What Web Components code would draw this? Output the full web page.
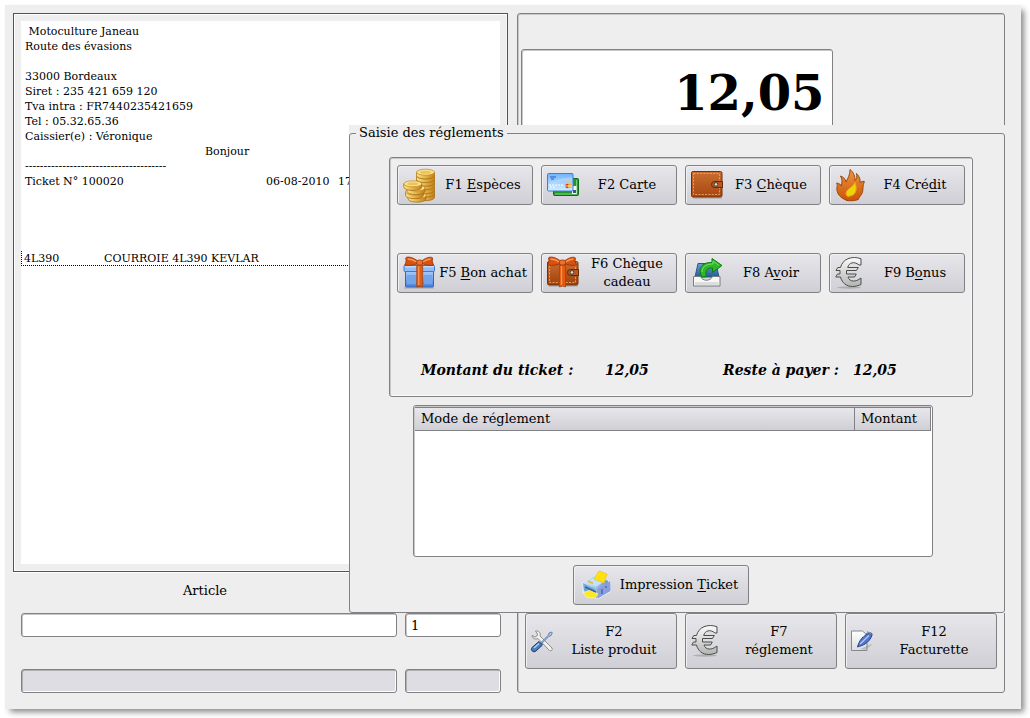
<!DOCTYPE html>
<html lang="fr">
<head>
<meta charset="utf-8">
<meta name="viewport" content="width=device-width, initial-scale=1">
<title>Caisse – Saisie des réglements</title>
<style>
  :root {
    --face: #eeeeee;
    --line: #808184;
    --soft: #c8c8ca;
    --button: linear-gradient(#e6e6eb, #cfcfd5);
  }
  body {
    margin: 0;
    padding: 5px 9px 9px 5px;
    background: #fff;
    color: #000;
    font: 13px/18px "DejaVu Serif", serif;
  }
</style>
</head>
<body>
<pos-app></pos-app>

<template id="tpl-app">
  <style>
    :host { display: block; }
    main {
      display: grid;
      grid-template-columns: minmax(0, 336fr) minmax(0, 159fr) minmax(0, 497fr);
      box-sizing: border-box;
      min-height: calc(100vh - 14px);
      padding: 8px 16px 16px 8px;
      background: var(--face);
      box-shadow: 4px 4px 6px -1px #888;
    }
    .sale { grid-area: 1 / 1 / 2 / 3; display: flex; flex-direction: column; }
    ticket-preview { flex: 1; }
    .fields {
      display: grid;
      grid-template-columns: minmax(0, 376fr) minmax(0, 96fr);
      align-items: end;
      gap: 32px 8px;
      padding: 10px 7px 0 8px;
    }
    .keys {
      grid-area: 1 / 3 / 2 / 4;
      display: flex;
      flex-direction: column;
      justify-content: space-between;
      box-sizing: border-box;
      margin-left: 9px;
      padding: 35px 7px 23px;
      border: 1px solid var(--line);
      border-radius: 3px;
      box-shadow: inset 1px 1px var(--soft);
    }
    .row { display: grid; grid-template-columns: repeat(3, minmax(0, 1fr)); gap: 8px; }
    amount-display { width: 66%; margin-left: -4px; }
    payment-dialog { grid-area: 1 / 2 / 2 / 4; align-self: start; margin-top: 112px; z-index: 1; }
  </style>
  <main>
    <section class="sale">
      <ticket-preview></ticket-preview>
      <div class="fields">
        <line-field label="Article"></line-field>
        <line-field name="Quantité" value="1"></line-field>
        <line-field name="Désignation" off></line-field>
        <line-field name="Prix" off></line-field>
      </div>
    </section>
    <section class="keys">
      <amount-display>12,05</amount-display>
      <div class="row">
        <key-button icon="tools" tall>F2<br>Liste produit</key-button>
        <key-button icon="euro" tall>F7<br>réglement</key-button>
        <key-button icon="invoice" tall>F12<br>Facturette</key-button>
      </div>
    </section>
    <payment-dialog></payment-dialog>
  </main>
</template>

<template id="tpl-ticket">
  <style>
    :host {
      display: block;
      box-sizing: border-box;
      padding: 7px;
      border: 1px solid #505254;
      box-shadow: inset 1px 1px #fff, inset -1px -1px #f8f8f8, 0 1px #fff;
      font-size: 11px;
      line-height: 15px;
    }
    .paper { box-sizing: border-box; height: 100%; padding-top: 3px; background: #fff; }
    p { margin: 0; padding-left: 4px; min-height: 15px; white-space: nowrap; }
    .hello { padding-left: 184px; }
    .head { display: grid; grid-template-columns: 241px 72px 1fr; }
    .item {
      display: grid;
      grid-template-columns: 80px 1fr;
      margin-top: 62px;
      padding-left: 2px;
      height: 14px;
      border: dotted #000;
      border-width: 0 0 1px 1px;
      white-space: nowrap;
    }
  </style>
  <div class="paper">
    <p>&nbsp;Motoculture Janeau</p>
    <p>Route des évasions</p>
    <p></p>
    <p>33000 Bordeaux</p>
    <p>Siret : 235 421 659 120</p>
    <p>Tva intra : FR7440235421659</p>
    <p>Tel : 05.32.65.36</p>
    <p>Caissier(e) : Véronique</p>
    <p class="hello">Bonjour</p>
    <p>--------------------------------------</p>
    <p class="head"><span>Ticket N° 100020</span><span>06-08-2010</span><span>17</span></p>
    <div class="item"><span>4L390</span><span>COURROIE 4L390 KEVLAR</span></div>
  </div>
</template>

<template id="tpl-amount">
  <style>
    :host {
      display: block;
      box-sizing: border-box;
      padding: 15px 7px;
      border: 1px solid var(--line);
      border-radius: 3px;
      background: #fff;
      box-shadow: inset 1px 1px var(--soft);
      font-size: 48px;
      font-weight: bold;
      line-height: 56px;
      text-align: right;
    }
  </style>
  <output><slot></slot></output>
</template>

<template id="tpl-field">
  <style>
    :host { display: block; }
    label { display: block; padding: 0 8px 13px 0; text-align: center; }
    input {
      display: block;
      box-sizing: border-box;
      width: 100%;
      height: 24px;
      margin: 0;
      padding: 0 5px;
      border: 1px solid var(--line);
      border-radius: 3px;
      background: #fff;
      box-shadow: inset 1px 1px var(--soft);
      color: #000;
      font: inherit;
    }
    input:disabled { background: #dddde3; box-shadow: inset 1px 1px #b0b0b4, inset -1px -1px #fff; }
  </style>
  <label for="field"></label>
  <input id="field" type="text">
</template>

<template id="tpl-key">
  <style>
    :host { display: block; }
    button {
      display: flex;
      align-items: center;
      box-sizing: border-box;
      width: 100%;
      height: 40px;
      margin: 0;
      padding: 0 1px 0 5px;
      border: 1px solid var(--line);
      border-radius: 3px;
      background: var(--button);
      box-shadow: inset 1px 1px #f0f0f4;
      color: #000;
      font: inherit;
      text-align: center;
    }
    :host([tall]) button { height: 56px; }
    .label { flex: 1; white-space: nowrap; }
    ::slotted(u) {
      text-decoration-thickness: 1px;
      text-underline-offset: 2px;
      text-decoration-skip-ink: none;
    }
  </style>
  <button type="button"><pos-icon></pos-icon><span class="label"><slot></slot></span></button>
</template>

<template id="tpl-dialog">
  <style>
    :host { display: block; background: var(--face); }
    fieldset {
      min-width: 0;
      margin: 0;
      padding: 16px 31px 7px 39px;
      border: 1px solid var(--line);
      border-radius: 3px;
    }
    legend { margin-left: -33px; padding: 0 3px; line-height: 16px; }
    .modes {
      padding: 7px;
      border: 1px solid var(--line);
      border-radius: 3px;
      box-shadow: inset 1px 1px var(--soft), inset -1px -1px #fafafa;
    }
    .grid { display: grid; grid-template-columns: repeat(4, minmax(0, 1fr)); gap: 48px 8px; }
    dl {
      display: grid;
      grid-template-columns: 184fr 118fr 130fr 112fr;
      margin: 68px 0 10px;
      padding-left: 24px;
      font-size: 14px;
      font-weight: bold;
      font-style: italic;
      white-space: nowrap;
    }
    dd { margin: 0; }
    payment-list { margin: 8px 40px 8px 24px; }
    .print { width: 176px; margin: 0 auto; padding-right: 40px; }
  </style>
  <fieldset>
    <legend>Saisie des réglements</legend>
    <div class="modes">
      <div class="grid">
        <key-button icon="coins">F1 <u>E</u>spèces</key-button>
        <key-button icon="cards">F2 Ca<u>r</u>te</key-button>
        <key-button icon="wallet">F3 <u>C</u>hèque</key-button>
        <key-button icon="flame">F4 Cré<u>d</u>it</key-button>
        <key-button icon="gift">F5 <u>B</u>on achat</key-button>
        <key-button icon="giftwallet">F6 Chè<u>q</u>ue<br>cadeau</key-button>
        <key-button icon="refund">F8 A<u>v</u>oir</key-button>
        <key-button icon="euro">F9 B<u>o</u>nus</key-button>
      </div>
      <dl><dt>Montant du ticket :</dt><dd>12,05</dd><dt>Reste à payer :</dt><dd>12,05</dd></dl>
    </div>
    <payment-list></payment-list>
    <div class="print"><key-button icon="printer">Impression <u>T</u>icket</key-button></div>
  </fieldset>
</template>

<template id="tpl-list">
  <style>
    :host {
      display: block;
      box-sizing: border-box;
      min-height: 152px;
      padding: 1px;
      border: 1px solid var(--line);
      border-radius: 3px;
      background: #fff;
      box-shadow: inset 1px 1px var(--soft);
    }
    table { width: 100%; border-collapse: separate; border-spacing: 0; table-layout: fixed; }
    th {
      height: 22px;
      padding: 0 6px;
      border: solid var(--line);
      border-width: 1px 1px 1px 0;
      background: var(--button);
      font-weight: normal;
      text-align: left;
    }
    th:last-child { width: 63px; }
  </style>
  <table>
    <thead><tr><th scope="col">Mode de réglement</th><th scope="col">Montant</th></tr></thead>
    <tbody></tbody>
  </table>
</template>

<script>
  const BOW = `<path d="M15 5C10 0 3-1 2 1c1 3 0 5-1 7 5 1 10 0 15-2 5 2 10 3 14 2-1-2-2-4-1-7-2-2-8 0-12 4z" fill="#d9510f" stroke="#8f3207" stroke-width=".8"/>
    <path d="M4 2c3 0 6 1 9 3M27 2c-3 0-5 1-8 3" stroke="#f79a62" stroke-width="1.4" fill="none"/>
    <rect x="13" y="3" width="6" height="5" rx="2" fill="#f0702c" stroke="#8f3207" stroke-width=".7"/>`;
  const RIBBON = `<path d="M13 8h6v22l-3-1-3 1z" fill="#e65a10" stroke="#a63c08" stroke-width=".7"/><path d="M15 9v19" stroke="#fb9557" stroke-width="1.3"/>`;
  const wallet = top => `<path d="M2 29h29" stroke="#999" stroke-width="1.5" opacity=".6"/>
    <rect x=".5" y="${top}" width="30.5" height="${28 - top}" rx="1.6" fill="url(#g)" stroke="#743107"/>
    <rect x="2.5" y="${top + 2}" width="26" height="${23.5 - top}" fill="none" stroke="#efa567" stroke-width=".9" stroke-dasharray="2 1.3"/>
    <path d="M31.5 12.5h-8a3 3 0 0 0 0 6h8z" fill="#b9571c" stroke="#63290a"/>
    <circle cx="25" cy="15.4" r="1.8" fill="#d8e4e6" stroke="#32434a"/>`;
  const coin = (x, y) => `<path d="M${x - 9} ${y}v3.2c0 4.6 18 4.6 18 0v-3.2z" fill="url(#g)" stroke="#a06a12" stroke-width=".7"/>
    <ellipse cx="${x}" cy="${y}" rx="9" ry="3" fill="#fbe394" stroke="#bd8420" stroke-width=".7"/>
    <ellipse cx="${x}" cy="${y}" rx="5.5" ry="1.5" fill="#eec352"/>`;
  const grad = (a, b, horizontal) => `<defs><linearGradient id="g" x2="${horizontal ? 1 : 0}" y2="${horizontal ? 0 : 1}"><stop stop-color="${a}"/><stop offset="1" stop-color="${b}"/></linearGradient></defs>`;
  const ICONS = {
    coins: [32, grad('#ffe584', '#c58014', true) +
      [25, 21.5, 18, 14, 10.5, 7, 3.2].map(y => coin(22.5, y)).join('') +
      coin(14, 26.5) + coin(11.5, 23) + coin(13, 19) + coin(9.8, 14.8)],
    cards: [32, grad('#6fb3ff', '#d7edff') +
      `<rect x="6.5" y="9.5" width="25" height="17" rx="1" fill="#25962b" stroke="#0c6d15"/>
       <path d="M8 25h22M29.6 11v14" stroke="#85d488"/><rect x="25" y="17" width="4.5" height="8" fill="#f4f8f4"/><path d="M26 21h3v3h-3z" fill="#454f8a"/>
       <rect x=".5" y="4.5" width="25.5" height="17.5" rx="1" fill="url(#g)" stroke="#3a7fdd"/>
       <path d="M3 8h6M4 10h3" stroke="#1e63bd" stroke-width="1.2"/><path d="M1 16C9 9 15 10 25 8v4c-9 0-15 0-24 8z" fill="#b6dafd" opacity=".6"/>
       <path d="M2 16h15M3 18h6" stroke="#fff" stroke-dasharray="2 1"/><rect x="19" y="10" width="5" height="5" fill="#c3cad1"/>
       <circle cx="20.5" cy="17" r="2.3" fill="#df3923"/><circle cx="23" cy="17" r="2.2" fill="#f5b52b"/><path d="M18 17h7" stroke="#fff" stroke-width=".7"/>`],
    wallet: [32, grad('#c96e30', '#a74711') + wallet(2.5)],
    giftwallet: [32, grad('#c96e30', '#9d410f') + wallet(4.5) + `<g transform="translate(-.5)">${RIBBON}${BOW}</g>`],
    gift: [32, grad('#a9ccfb', '#477fd8') +
      `<path d="M1 31h30" stroke="#888" opacity=".6"/><rect x="2.5" y="14" width="28" height="16" rx="1" fill="url(#g)" stroke="#3467b8"/>
       <path d="M4 18h9v9H4zM21 18h8v9h-8z" fill="#73a5ec"/>
       <rect x="1" y="8.5" width="30.5" height="6" rx=".8" fill="#91bdf8" stroke="#4379cb"/><path d="M2 9.8h29" stroke="#d3e7ff"/>
       <g transform="translate(.7)">${RIBBON}${BOW}</g>`],
    flame: [32, grad('#ea963f', '#cd5208') +
      `<path d="M12 31.4C5 29 1 24 2 18c.4-2 0-3-.4-4 3 .4 4 1.5 4.5 3 1.5-4 1-7-.6-10 3 1 5 3 5.5 6 2-4 4-7 4-12.5 4 3 5 7 5 11 2-2 2-4 1.5-7 3 3 4 6 3.5 9 1-.4 2-1.5 4.4-1-2 4-1 8-2 11-1 3-4 5-4 7-4 1.5-8 1.5-12 .9z" fill="url(#g)" stroke="#924008" stroke-width=".9"/>
       <path d="M20 13.500c-2 5-8 6-9 10.500 0 3 2 4 4 3 6-1 7.500-7 5-13.500z" fill="#ecd408" stroke="#f5a51b"/>`],
    refund: [32, grad('#6d9bd0', '#245b9d') +
      `<path d="M4 20 7 6.5h18l3 13.500z" fill="url(#g)" stroke="#2b578c"/>
       <path d="M2.500 19.500h7c2 5 10 5 12 0h7.500v9.500H2.500z" fill="#f7f7f5" stroke="#777b7f"/>
       <path d="M4 25h23.500v3H4z" fill="#dcdddd"/>
       <path d="M11 20c-5-8 0-15 10-14.500V1.500L31 8.500l-9.500 7v-4.500c-6-.5-7.500 3.500-6 8.500z" fill="#2fb62b" stroke="#087e0c"/>
       <path d="M11 15c0-5 4-8 11-8V4l6 4.500" fill="none" stroke="#8be878" stroke-width=".8"/>`],
    euro: [32, grad('#fbfbfa', '#b3b5b1') +
      `<ellipse cx="14" cy="30.500" rx="12" ry="1.200" fill="#777" opacity=".4"/>
       <path d="M26 1.800C22 .2 17 0 13 1.700 9 3.400 6.500 6.500 5.500 10.500H2.800L1 13.500h4v3.500H2.500L.800 20h4.700c1.500 6 6 9.500 12 9.500 3 0 6-.8 8.500-2v-6.500c-5.500 4.500-11.500 4-13-1h6.500l1.800-3H11.500v-3.500h10l1.800-3H12.700c1.300-5 6.300-6.500 11.300-2.500h2z" fill="url(#g)" stroke="#4b4e4a"/>`],
    printer: [32, grad('#d8edff', '#638fc4', true) +
      `<path d="M3 14 15 7l14 4 3 11-13 8L4 24z" fill="url(#g)" stroke="#dcecf8"/><path d="m4 14 12 6 2 9L5 22z" fill="#74a6d8"/><path d="M18 20 31 12l.5 9L19 29z" fill="#8b9eda"/>
       <path d="m6 13 10-5 11 3-10 7z" fill="#c2e1fa"/><path d="m9 12 5 2.500" stroke="#eeb926" stroke-width="1.500"/>
       <path d="m15 10 5-8 8 3-3 9z" fill="#ffe10b" stroke="#efbc00" stroke-width=".6"/><path d="m4 24 7-3 8 4-3 4-8-.5z" fill="#ffe820" stroke="#fff6a2" stroke-width=".7"/><path d="m6 18 11 5" stroke="#35659a" stroke-width="1.500"/><path d="M23 20v5M27 17v2" stroke="#5267b2" stroke-width="1.500"/>`],
    tools: [22, `<path d="M1 5.500 4 7l2-1 .5-2L4.500 1C8 .5 10 3 9 6l12 12c1 2-1 3.500-2.500 2.500L7 8.500C4 10 1 8 1 5.500z" fill="#f1f1f0" stroke="#82847f" stroke-width=".9"/>
       <path d="m8.500 14 9-9 .5-2 2.500-1 .8 1-1.300 2.500-2 .8-8.500 8.500z" fill="#b3cde9" stroke="#476c9d" stroke-width=".8"/>
       <path d="M8 11.500 11.500 15 5 21c-2.500 2-6-.5-4-3.500z" fill="#4b7db9" stroke="#183c6e"/><path d="m3 18 5-4.500" stroke="#b2d2f3" stroke-width="1.300"/>`],
    invoice: [22, grad('#ffffff', '#dddde1') +
      `<path d="M.5 1h11l4.500 4v15.500H.5z" fill="url(#g)" stroke="#85868e"/><path d="m9 19 9-4 4-1-8 6z" fill="#888" opacity=".4"/>
       <path d="M6.500 17C8 11 12 5 18.500 3c1.500-.5 3 .5 2.500 2-1 4-4 7-7 9-2.500 1.500-4.500 2-7.500 3z" fill="#5276c8" stroke="#2b418a"/><path d="m9 14 9-8.500" stroke="#b8ccfa" stroke-width="1.300"/><path d="m12 7 4.500-4.500 3 .5M16 1.500l4.500 2.500" stroke="#8d9099" fill="none"/>`]
  };

  const define = (tag, template, setup) => customElements.define(tag, class extends HTMLElement {
    constructor() {
      super();
      this.attachShadow({ mode: 'open' });
    }
    connectedCallback() {
      if (this.shadowRoot.firstChild) return;
      this.shadowRoot.append(document.importNode(document.getElementById(template).content, true));
      if (setup) setup(this, this.shadowRoot);
    }
  });

  customElements.define('pos-icon', class extends HTMLElement {
    static observedAttributes = ['name'];
    constructor() {
      super();
      this.attachShadow({ mode: 'open' });
    }
    attributeChangedCallback() {
      const [size, art] = ICONS[this.getAttribute('name')];
      this.shadowRoot.innerHTML = `<style>:host { display: block; flex: none; } svg { display: block; overflow: visible; }</style>
        <svg width="${size}" height="${size}" viewBox="0 0 ${size} ${size}" fill="none" aria-hidden="true">${art}</svg>`;
    }
  });

  define('ticket-preview', 'tpl-ticket');
  define('amount-display', 'tpl-amount');
  define('payment-list', 'tpl-list');
  define('line-field', 'tpl-field', (host, root) => {
    const label = root.querySelector('label');
    const input = root.querySelector('input');
    if (host.hasAttribute('label')) label.textContent = host.getAttribute('label');
    else {
      label.remove();
      input.setAttribute('aria-label', host.getAttribute('name'));
    }
    input.value = host.getAttribute('value') || '';
    input.disabled = host.hasAttribute('off');
  });
  define('key-button', 'tpl-key', (host, root) => {
    root.querySelector('pos-icon').setAttribute('name', host.getAttribute('icon'));
  });
  define('payment-dialog', 'tpl-dialog');
  define('pos-app', 'tpl-app');
</script>
</body>
</html>
